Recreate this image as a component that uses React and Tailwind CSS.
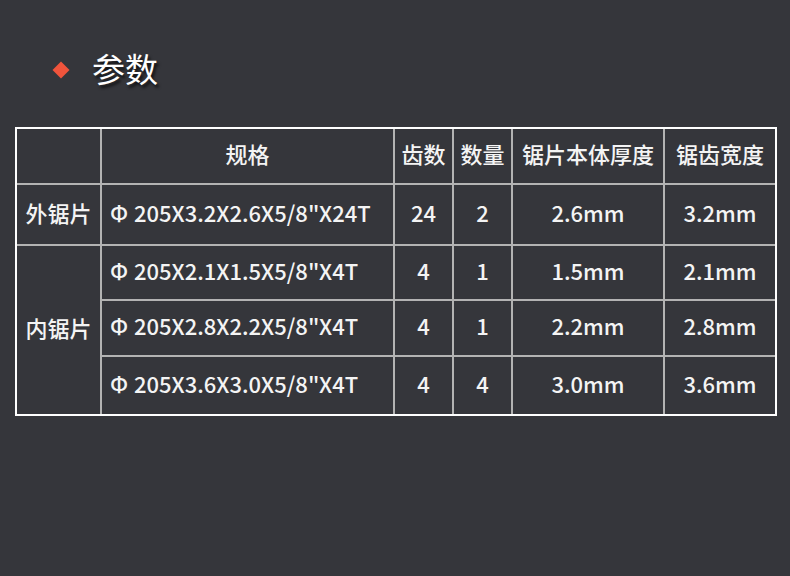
export default function App() {
  const font = { fontFamily: '"Noto Sans CJK SC", "Noto Sans", sans-serif' };
  const cell = "bg-[#35363b] flex items-center justify-center pb-[6px]";
  const spec = "bg-[#35363b] flex items-center justify-start pl-[8px] pb-[6px]";
  const Phi = () => <span className="inline-block w-[24px]">Φ</span>;
  return (
    <div className="w-[790px] h-[576px] bg-[#35363b] text-[#f4f4f4] overflow-hidden" style={font}>
      <div className="flex items-center h-[50px] mt-[45px] pl-[55px]">
        <div className="w-[12px] h-[12px] bg-[#f0543c] rotate-45"></div>
        <div className="ml-[25px] -mt-[4px] text-[33px] font-normal leading-none text-white [text-shadow:2px_3px_3px_rgba(0,0,0,0.7)]">参数</div>
      </div>
      <div className="ml-[15px] mt-[32px] w-[762px] border-2 border-white">
        <div className="grid grid-cols-[83px_291px_57px_57px_150px_110px] grid-rows-[54px_59px_53px_54px_57px] gap-[2px] bg-[#b3b3b3] text-[22px] font-medium leading-none">
          <div className={cell}></div>
          <div className={cell}>规格</div>
          <div className={cell}>齿数</div>
          <div className={cell}>数量</div>
          <div className={cell}>锯片本体厚度</div>
          <div className={cell}>锯齿宽度</div>

          <div className={cell}>外锯片</div>
          <div className={spec}><Phi />205X3.2X2.6X5/8"X24T</div>
          <div className={cell}>24</div>
          <div className={cell}>2</div>
          <div className={cell}>2.6mm</div>
          <div className={cell}>3.2mm</div>

          <div className={cell + " row-span-3"}>内锯片</div>
          <div className={spec}><Phi />205X2.1X1.5X5/8"X4T</div>
          <div className={cell}>4</div>
          <div className={cell}>1</div>
          <div className={cell}>1.5mm</div>
          <div className={cell}>2.1mm</div>

          <div className={spec}><Phi />205X2.8X2.2X5/8"X4T</div>
          <div className={cell}>4</div>
          <div className={cell}>1</div>
          <div className={cell}>2.2mm</div>
          <div className={cell}>2.8mm</div>

          <div className={spec}><Phi />205X3.6X3.0X5/8"X4T</div>
          <div className={cell}>4</div>
          <div className={cell}>4</div>
          <div className={cell}>3.0mm</div>
          <div className={cell}>3.6mm</div>
        </div>
      </div>
    </div>
  );
}
